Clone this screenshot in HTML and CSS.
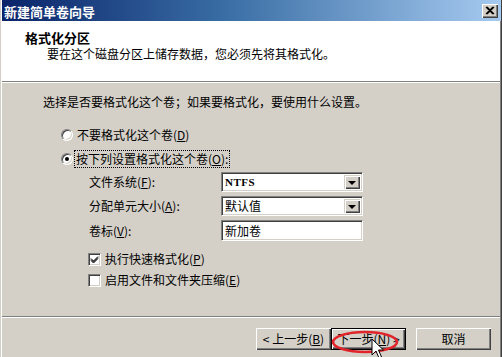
FILE: index.html
```html
<!DOCTYPE html>
<html>
<head>
<meta charset="utf-8">
<link rel="stylesheet" href="styles.css">
</head>
<body>
<div class="window">
  <div class="titlebar">
    <span class="title">新建简单卷向导</span>
    <span class="close"><svg width="16" height="14" viewBox="0 0 16 14"><path d="M4 3 L11 10 M5 3 L12 10 M11 3 L4 10 M12 3 L5 10" stroke="#000" stroke-width="1.2"/></svg></span>
  </div>
  <div class="header">
    <div class="h-title">格式化分区</div>
    <div class="h-sub">要在这个磁盘分区上储存数据，您必须先将其格式化。</div>
  </div>
  <div class="body">
    <div class="intro">选择是否要格式化这个卷；如果要格式化，要使用什么设置。</div>
    <div class="radio-row r1"><span class="radio"></span><span class="rtext">不要格式化这个卷(<u>D</u>)</span></div>
    <div class="radio-row r2"><span class="radio checked"></span><span class="rtext focus">按下列设置格式化这个卷(<u>O</u>):</span></div>
    <div class="field f1"><span class="lbl">文件系统(<u>F</u>):</span><span class="combo"><span class="val mono">NTFS</span><span class="drop"><span class="arrow"></span></span></span></div>
    <div class="field f2"><span class="lbl">分配单元大小(<u>A</u>):</span><span class="combo"><span class="val">默认值</span><span class="drop"><span class="arrow"></span></span></span></div>
    <div class="field f3"><span class="lbl">卷标(<u>V</u>):</span><span class="input"><span class="val">新加卷</span></span></div>
    <div class="check-row c1"><span class="check"><svg width="9" height="9" viewBox="0 0 9 9"><path d="M1 3.5 L3.5 6 L8 1.5 M1 4.5 L3.5 7 L8 2.5 M1 5.5 L3.5 8 L8 3.5" stroke="#000" stroke-width="1" fill="none"/></svg></span><span class="ctext">执行快速格式化(<u>P</u>)</span></div>
    <div class="check-row c2"><span class="check"></span><span class="ctext">启用文件和文件夹压缩(<u>E</u>)</span></div>
    <div class="sep"></div>
    <div class="buttons">
      <span class="btn">&lt; 上一步(<u>B</u>)</span>
      <span class="btn default">下一步(<u>N</u>) &gt;
        <svg class="ellipse" width="68" height="24" viewBox="0 0 68 24"><ellipse cx="34" cy="12" rx="32" ry="10" fill="none" stroke="#e0242a" stroke-width="2.6"/></svg>
        <svg class="cursor" width="14" height="22" viewBox="0 0 14 22"><path d="M1 1 L1 17 L5 13 L8 20 L10.5 19 L7.5 12 L12.5 12 Z" fill="#fff" stroke="#000" stroke-width="1"/></svg>
      </span>
      <span class="btn cancel">取消</span>
    </div>
  </div>
</div>
</body>
</html>
```

FILE: styles.css
```css
html, body {
  margin: 0;
  padding: 0;
}
body {
  width: 502px;
  height: 357px;
  overflow: hidden;
  background: #d4d0c8;
  font-family: "Noto Sans CJK SC", "Noto Sans", sans-serif;
  font-size: 12px;
  color: #000;
}
u { text-decoration: underline; text-underline-offset: 1px; }

.window {
  width: 502px;
  height: 357px;
  box-sizing: border-box;
  padding: 0 2px;
  background: #d4d0c8;
  box-shadow: inset 1px 0 #d4d0c8, inset 2px 0 #ffffff, inset -1px 0 #404040, inset -2px 0 #808080;
  display: flex;
  flex-direction: column;
}

.titlebar {
  height: 21px;
  flex: none;
  margin-right: -1px;
  background: linear-gradient(to right, #0a246a 0%, #3a6ea5 45%, #a6caf0 100%);
  display: flex;
  align-items: center;
  justify-content: space-between;
  padding: 0 2px 0 2px;
  box-sizing: border-box;
}
.title {
  color: #fff;
  font-weight: bold;
  font-size: 13px;
  line-height: 21px;
  padding-top: 1px;
}
.close {
  width: 16px;
  height: 14px;
  background: #d4d0c8;
  box-shadow: inset 1px 1px #fff, inset -1px -1px #404040, inset -2px -2px #808080;
  display: flex;
  margin-right: 1px;
}

.header {
  height: 61px;
  flex: none;
  box-sizing: border-box;
  background: #fff;
  border-bottom: 1px solid #808080;
  box-shadow: 0 1px #fff;
  padding-top: 10px;
}
.h-title {
  font-weight: bold;
  font-size: 13px;
  line-height: 13px;
  padding-left: 23px;
}
.h-sub {
  line-height: 13px;
  margin-top: 3px;
  padding-left: 45px;
}

.body {
  flex: 1;
  padding-top: 13px;
  display: flex;
  flex-direction: column;
}
.intro {
  line-height: 14px;
  padding-left: 41px;
}

.radio-row {
  height: 20px;
  display: flex;
  align-items: center;
  padding-left: 59px;
}
.r1 { margin-top: 16px; }
.r2 { margin-top: 4px; }
.radio {
  width: 10px;
  height: 10px;
  border-radius: 50%;
  border: 1px solid;
  border-color: #808080 #ffffff #ffffff #808080;
  background: #fff;
  box-shadow: inset 1px 1px #404040, inset -1px -1px #d4d0c8;
  position: relative;
  flex: none;
}
.radio.checked::after {
  content: "";
  position: absolute;
  left: 3px;
  top: 3px;
  width: 4px;
  height: 4px;
  border-radius: 50%;
  background: #000;
}
.rtext {
  margin-left: 4px;
  line-height: 14px;
}
.focus {
  margin-left: 2px;
  padding: 1px 1px;
  outline: 1px dotted #000;
  outline-offset: 0;
}

.field {
  display: flex;
  align-items: center;
  padding-left: 87px;
}
.f1 { height: 20px; margin-top: 3px; }
.f2 { height: 20px; margin-top: 4px; }
.f3 { height: 21px; margin-top: 4px; }
.lbl {
  width: 132px;
  line-height: 14px;
}
.combo, .input {
  width: 142px;
  box-sizing: border-box;
  background: #fff;
  border: 1px solid;
  border-color: #808080 #ffffff #ffffff #808080;
  box-shadow: inset 1px 1px #404040, inset -1px -1px #d4d0c8;
  display: flex;
  align-items: center;
  justify-content: space-between;
  padding: 2px;
}
.combo { height: 20px; }
.input { height: 21px; }
.val {
  padding-left: 1px;
  line-height: 14px;
}
.mono {
  font-family: "Liberation Serif", serif;
  font-weight: bold;
  font-size: 11px;
  letter-spacing: 0.5px;
}
.drop {
  width: 16px;
  height: 14px;
  box-sizing: border-box;
  background: #d4d0c8;
  box-shadow: inset 1px 1px #d4d0c8, inset 2px 2px #fff, inset -1px -1px #404040, inset -2px -2px #808080;
  display: flex;
  align-items: center;
  justify-content: center;
}
.arrow {
  width: 0;
  height: 0;
  border-left: 4px solid transparent;
  border-right: 4px solid transparent;
  border-top: 4px solid #000;
  margin-top: 1px;
}

.check-row {
  display: flex;
  align-items: center;
  height: 20px;
  padding-left: 86px;
}
.c1 { margin-top: 8px; }
.c2 { margin-top: 1px; }
.check {
  width: 13px;
  height: 13px;
  box-sizing: border-box;
  border: 1px solid;
  border-color: #808080 #ffffff #ffffff #808080;
  background: #fff;
  box-shadow: inset 1px 1px #404040, inset -1px -1px #d4d0c8;
  display: flex;
  align-items: center;
  justify-content: center;
  flex: none;
}
.ctext {
  margin-left: 4px;
  line-height: 14px;
}

.sep {
  margin-top: 26px;
  height: 1px;
  background: #808080;
  border-bottom: 1px solid #fff;
}

.buttons {
  margin-top: 10px;
  display: flex;
  justify-content: flex-end;
  padding-right: 9px;
}
.btn {
  width: 75px;
  height: 22px;
  box-sizing: border-box;
  display: flex;
  align-items: center;
  justify-content: center;
  white-space: nowrap;
  line-height: 14px;
  background: #d4d0c8;
  box-shadow: inset 1px 1px #fff, inset -1px -1px #404040, inset -2px -2px #808080;
  position: relative;
}
.btn.default {
  border: 1px solid #000;
}
.btn.cancel {
  margin-left: 10px;
}
.ellipse {
  position: absolute;
  left: -1px;
  top: 1px;
}
.cursor {
  position: absolute;
  left: 39px;
  top: 9px;
}
```
